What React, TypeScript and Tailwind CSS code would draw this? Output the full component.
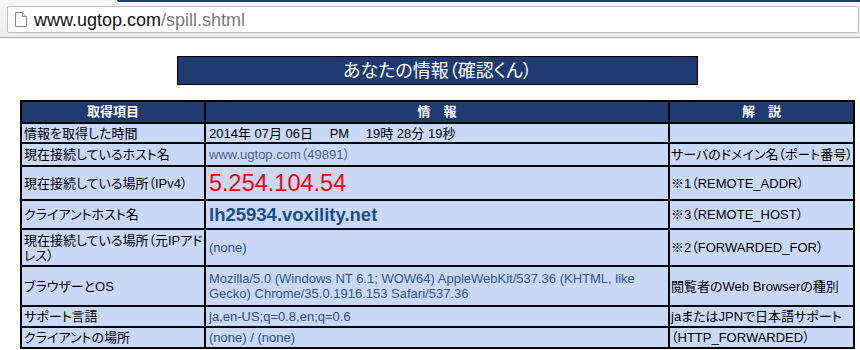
import React from "react";

const cell = "bg-[#cad8f8] align-middle leading-[15px]";

interface Row {
  label: React.ReactNode;
  info: React.ReactNode;
  note: React.ReactNode;
  h: string;
}

const rows: Row[] = [
  {
    label: "情報を取得した時間",
    info: <span className="text-black whitespace-pre">2014年 07月 06日　 PM　 19時 28分 19秒</span>,
    note: "",
    h: "h-[18px]",
  },
  {
    label: "現在接続しているホスト名",
    info: <span className="text-[#44608e]">www.ugtop.com（49891）</span>,
    note: "サーバのドメイン名（ポート番号）",
    h: "h-[21px]",
  },
  {
    label: "現在接続している場所（IPv4）",
    info: <span className="text-[#ff0000] text-[23.5px] leading-[26px]">5.254.104.54</span>,
    note: "※1（REMOTE_ADDR）",
    h: "h-[32px]",
  },
  {
    label: "クライアントホスト名",
    info: <span className="text-[#1b4d88] text-[18.5px] font-bold leading-[20px]">lh25934.voxility.net</span>,
    note: "※3（REMOTE_HOST）",
    h: "h-[27px]",
  },
  {
    label: (
      <>
        現在接続している場所（元IPアド
        <br />
        レス）
      </>
    ),
    info: <span className="text-[#2e4b7a]">(none)</span>,
    note: "※2（FORWARDED_FOR）",
    h: "h-[35px]",
  },
  {
    label: "ブラウザーとOS",
    info: (
      <span className="text-[#34548a]">
        Mozilla/5.0 (Windows NT 6.1; WOW64) AppleWebKit/537.36 (KHTML, like
        <br />
        Gecko) Chrome/35.0.1916.153 Safari/537.36
      </span>
    ),
    note: "閲覧者のWeb Browserの種別",
    h: "h-[38px]",
  },
  {
    label: "サポート言語",
    info: <span className="text-[#2e4b7a]">ja,en-US;q=0.8,en;q=0.6</span>,
    note: "jaまたはJPNで日本語サポート",
    h: "h-[19px]",
  },
  {
    label: "クライアントの場所",
    info: <span className="text-[#2e4b7a]">(none) / (none)</span>,
    note: "（HTTP_FORWARDED）",
    h: "h-[19px]",
  },
];

export default function App() {
  return (
    <div className="w-[860px] h-[350px] overflow-hidden bg-white font-['Liberation_Sans','Noto_Sans_CJK_JP',sans-serif]">
      {/* browser toolbar */}
      <div className="h-[38px] bg-gradient-to-b from-[#f7f7f7] to-[#ededed] border-b border-[#a8a8a8]">
        <div className="flex h-[2px]">
          <div className="w-[117px]" />
          <div className="flex-1 bg-[#1c3f73] rounded-bl-[2px]" />
        </div>
        <div className="ml-[7px] mt-[4px] w-[852px] h-[27px] bg-white border border-[#bcbcbc] rounded-[2px] flex items-center">
          <svg width="14" height="17" viewBox="0 0 14 17" className="ml-[6px]">
            <path d="M1.5 1.5h7l4 4v10h-11z" fill="#fff" stroke="#8a8a8a" />
            <path d="M8.5 1.5v4h4" fill="#e8e8e8" stroke="#8a8a8a" />
          </svg>
          <span className="ml-[6px] text-[18px] leading-[20px] text-[#111]">
            www.ugtop.com<span className="text-[#7a7a7a]">/spill.shtml</span>
          </span>
        </div>
      </div>

      {/* title */}
      <div className="ml-[177px] mt-[18px] w-[521px] h-[29px] bg-[#1e3a71] border border-black flex items-center justify-center">
        <span className="text-white text-[18px] leading-[20px] [font-feature-settings:'palt']">
          あなたの情報（確認くん）
        </span>
      </div>

      {/* info table */}
      <table className="ml-[20px] mt-[15px] w-[835px] table-fixed border-separate border-spacing-[2px] bg-black text-[13px] [font-feature-settings:'palt']">
        <colgroup>
          <col className="w-[182px]" />
          <col className="w-[462px]" />
          <col className="w-[183px]" />
        </colgroup>
        <thead>
          <tr className="h-[20px]">
            <th className="bg-[#1e3a71] text-white font-bold">取得項目</th>
            <th className="bg-[#1e3a71] text-white font-bold whitespace-pre">情　報</th>
            <th className="bg-[#1e3a71] text-white font-bold whitespace-pre">解　説</th>
          </tr>
        </thead>
        <tbody>
          {rows.map((r, i) => (
            <tr key={i} className={r.h}>
              <td className={`${cell} px-[2px] text-black whitespace-nowrap`}>{r.label}</td>
              <td className={`${cell} px-[3px]`}>{r.info}</td>
              <td className={`${cell} px-[1px] text-black whitespace-nowrap`}>{r.note}</td>
            </tr>
          ))}
        </tbody>
      </table>
    </div>
  );
}
